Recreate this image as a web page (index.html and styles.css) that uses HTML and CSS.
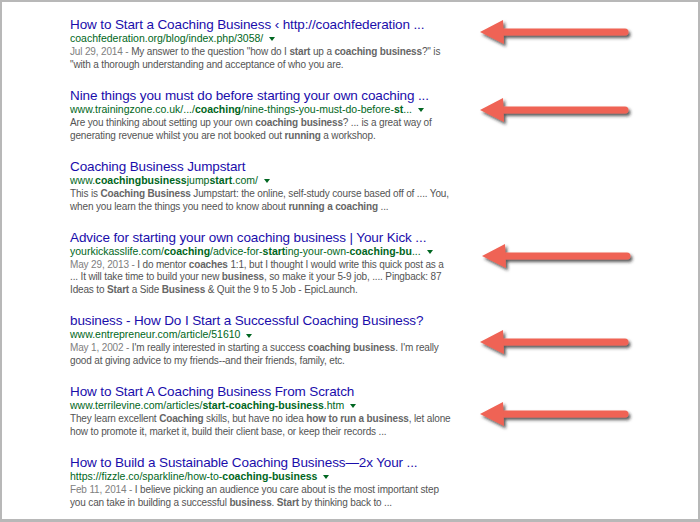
FILE: index.html
```html
<!DOCTYPE html>
<html>
<head>
<meta charset="utf-8">
<link rel="stylesheet" href="styles.css">
</head>
<body>
<div class="frame">
  <div class="results">
    <div class="result">
      <a class="title">How to Start a Coaching Business ‹ http://coachfederation ...</a>
      <div class="url">coachfederation.org/blog/index.php/3058/<span class="caret"></span></div>
      <div class="snippet"><span class="date">Jul 29, 2014 - </span>My answer to the question "how do I <b>start</b> up a <b>coaching business</b>?" is<br>"with a thorough understanding and acceptance of who you are.</div>
    </div>
    <div class="result">
      <a class="title">Nine things you must do before starting your own coaching ...</a>
      <div class="url">www.trainingzone.co.uk/.../<b>coaching</b>/nine-things-you-must-do-before-<b>st</b>...<span class="caret"></span></div>
      <div class="snippet">Are you thinking about setting up your own <b>coaching business</b>? ... is a great way of<br>generating revenue whilst you are not booked out <b>running</b> a workshop.</div>
    </div>
    <div class="result">
      <a class="title">Coaching Business Jumpstart</a>
      <div class="url">www.<b>coachingbusiness</b>jump<b>start</b>.com/<span class="caret"></span></div>
      <div class="snippet">This is <b>Coaching Business</b> Jumpstart: the online, self-study course based off of .... You,<br>when you learn the things you need to know about <b>running a coaching</b> ...</div>
    </div>
    <div class="result">
      <a class="title">Advice for starting your own coaching business | Your Kick ...</a>
      <div class="url">yourkickasslife.com/<b>coaching</b>/advice-for-<b>start</b>ing-your-own-<b>coaching-bu</b>...<span class="caret"></span></div>
      <div class="snippet"><span class="date">May 29, 2013 - </span>I do mentor <b>coaches</b> 1:1, but I thought I would write this quick post as a<br>... It will take time to build your new <b>business</b>, so make it your 5-9 job, .... Pingback: 87<br>Ideas to <b>Start</b> a Side <b>Business</b> &amp; Quit the 9 to 5 Job - EpicLaunch.</div>
    </div>
    <div class="result">
      <a class="title">business - How Do I Start a Successful Coaching Business?</a>
      <div class="url">www.entrepreneur.com/article/51610<span class="caret"></span></div>
      <div class="snippet"><span class="date">May 1, 2002 - </span>I'm really interested in starting a success <b>coaching business</b>. I'm really<br>good at giving advice to my friends--and their friends, family, etc.</div>
    </div>
    <div class="result">
      <a class="title">How to Start A Coaching Business From Scratch</a>
      <div class="url">www.terrilevine.com/articles/<b>start-coaching-business</b>.htm<span class="caret"></span></div>
      <div class="snippet">They learn excellent <b>Coaching</b> skills, but have no idea <b>how to run a business</b>, let alone<br>how to promote it, market it, build their client base, or keep their records ...</div>
    </div>
    <div class="result">
      <a class="title">How to Build a Sustainable Coaching Business—2x Your ...</a>
      <div class="url">https://fizzle.co/sparkline/how-to-<b>coaching-business</b><span class="caret"></span></div>
      <div class="snippet"><span class="date">Feb 11, 2014 - </span>I believe picking an audience you care about is the most important step<br>you can take in building a successful <b>business</b>. <b>Start</b> by thinking back to ...</div>
    </div>
  </div>
  <svg class="arrows" width="700" height="522" viewBox="0 0 700 522" xmlns="http://www.w3.org/2000/svg">
    <defs>
      <filter id="sh" x="-20%" y="-50%" width="140%" height="200%">
        <feDropShadow dx="2" dy="2.5" stdDeviation="1.4" flood-color="#222" flood-opacity="0.75"/>
      </filter>
      <g id="arrow">
        <line x1="498" y1="0" x2="625" y2="0" stroke="#ef6354" stroke-width="7" stroke-linecap="round"/>
        <polygon points="480,0 503,-12 504,12" fill="#ef6354"/>
      </g>
    </defs>
    <g filter="url(#sh)">
      <use href="#arrow" transform="translate(0,32)"/>
      <use href="#arrow" transform="translate(0,110)"/>
      <use href="#arrow" transform="translate(2,256)"/>
      <use href="#arrow" transform="translate(0,342)"/>
      <use href="#arrow" transform="translate(0,414)"/>
    </g>
  </svg>
</div>
</body>
</html>
```
FILE: styles.css
```css
html, body {
  margin: 0;
  padding: 0;
  background: #ffffff;
}
.frame {
  position: relative;
  width: 700px;
  height: 522px;
  box-sizing: border-box;
  border: 2px solid #b8b8b8;
  border-bottom-width: 3px;
  background: #ffffff;
  overflow: hidden;
  font-family: Arial, "Liberation Sans", sans-serif;
}
.results {
  display: flex;
  flex-direction: column;
  gap: 16.5px;
  padding: 15px 0 0 68px;
}
.result {
  display: flex;
  flex-direction: column;
  white-space: nowrap;
}
.title {
  color: #1a0dab;
  font-size: 13.5px;
  letter-spacing: -0.12px;
  line-height: 15px;
  text-decoration: none;
}
.url {
  color: #006621;
  font-size: 10.5px;
  line-height: 13px;
  margin-bottom: 1px;
}
.caret {
  display: inline-block;
  width: 0;
  height: 0;
  border-left: 3px solid transparent;
  border-right: 3px solid transparent;
  border-top: 4px solid #006621;
  margin-left: 6px;
  vertical-align: middle;
}
.snippet {
  color: #545454;
  font-size: 10px;
  letter-spacing: -0.15px;
  line-height: 12.7px;
}
.snippet b {
  color: #666666;
}
.date {
  color: #808080;
}
.arrows {
  position: absolute;
  left: -2px;
  top: -2px;
  pointer-events: none;
}
```
